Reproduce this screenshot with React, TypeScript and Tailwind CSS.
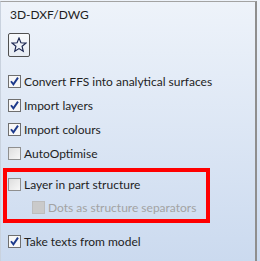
import React from 'react';

type CheckProps = { checked?: boolean; disabled?: boolean };

function Check({ checked, disabled }: CheckProps) {
  let box = 'border-[#8f8f8f] bg-gradient-to-br from-[#dedede] to-[#f8f8f8]';
  if (checked) box = 'border-[#6f6f6f] bg-[#f7f7f7]';
  if (disabled) box = 'border-[#bdbdbd] bg-[#cacaca]';
  return (
    <span className={`flex h-[13px] w-[13px] shrink-0 items-center justify-center border ${box}`}>
      {checked && (
        <svg width="11" height="11" viewBox="0 0 11 11">
          <path d="M2 5.2 L4.4 8.4 L9 1.6" stroke="#1d3a8c" strokeWidth="1.9" fill="none" />
        </svg>
      )}
    </span>
  );
}

function Row({ label, checked, disabled, className = '' }: CheckProps & { label: string; className?: string }) {
  return (
    <div className={`flex h-[13px] items-center gap-[3px] ${className}`}>
      <Check checked={checked} disabled={disabled} />
      <span className={`whitespace-nowrap leading-[16px] ${disabled ? 'text-[#a3a3a3]' : 'text-[#1e1e1e]'}`}>{label}</span>
    </div>
  );
}

export default function App() {
  return (
    <div className="h-[261px] w-[260px] overflow-hidden bg-gradient-to-b from-[#eef3fa] to-[#cbdaef] pt-px font-['Lato',sans-serif] text-[12px]">
      <div className="flex h-[260px] w-[257px] flex-col border-t border-l border-r-2 border-t-[#a3a3a3] border-l-[#c9d2de] border-r-[#8e8e8e]">
        {/* Header */}
        <div className="mt-[5px] pl-[9px] leading-[16px] text-[#1e1e1e]">3D-DXF/DWG</div>
        <button className="mt-[10px] ml-[7px] flex h-[24px] w-[22px] items-center justify-center rounded-[2px] border border-[#505050] bg-gradient-to-b from-[#f8fafc] to-[#e6ebf2]">
          <svg width="16" height="16" viewBox="0 0 15 15">
            <polygon
              points="7.5,1 9.3,5.4 14,5.7 10.4,8.7 11.5,13.4 7.5,10.9 3.5,13.4 4.6,8.7 1,5.7 5.7,5.4"
              fill="none"
              stroke="#1a2550"
              strokeWidth="1.1"
              strokeLinejoin="miter"
            />
          </svg>
        </button>

        {/* Options */}
        <div className="mt-[18px] flex flex-col gap-[11px] pl-[7px]">
          <Row label="Convert FFS into analytical surfaces" checked />
          <Row label="Import layers" checked />
          <Row label="Import colours" checked />
          <Row label="AutoOptimise" />
        </div>

        <div className="mt-[8px] ml-[2px] flex w-[207px] flex-col gap-[10px] border-4 border-[#ff0000] pt-[6px] pb-[5px] pl-px">
          <Row label="Layer in part structure" />
          <Row label="Dots as structure separators" disabled className="pl-[24px]" />
        </div>

        <div className="mt-[12px] pl-[7px]">
          <Row label="Take texts from model" checked />
        </div>
      </div>
    </div>
  );
}
